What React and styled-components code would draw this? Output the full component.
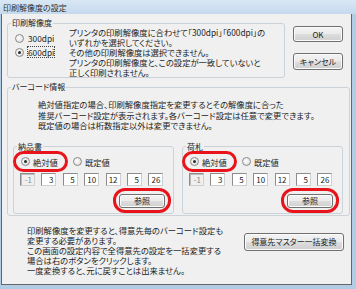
import styled, { createGlobalStyle } from 'styled-components';

const GlobalStyle = createGlobalStyle`
  html, body {
    margin: 0;
    padding: 0;
    width: 356px;
    height: 289px;
    overflow: hidden;
    background: #f0f0f0;
  }
  body {
    font-family: "Noto Sans CJK JP", "Noto Sans", sans-serif;
    font-feature-settings: "palt";
    color: #1c1c1c;
  }
`;

const Window = styled.div`
  width: 356px;
  height: 289px;
  display: flex;
  flex-direction: column;
  background: #b3cce6;
`;

const TitleBar = styled.div`
  height: 14px;
  flex: none;
  display: flex;
  align-items: center;
  padding-left: 3px;
  font-size: 8px;
  color: #2e2e2e;
  background: linear-gradient(#d9e7f5, #c6d9ed);
`;

const Client = styled.div`
  flex: 1;
  margin: 0 4px 4px 1px;
  border: 1px solid #666;
  border-top: none;
  background: #f0f0f0;
  padding-top: 5px;
  display: flex;
  flex-direction: column;
  font-size: 8.3px;
`;

const TopRow = styled.div`
  display: flex;
  align-items: flex-start;
  gap: 8px;
  padding-left: 5px;
`;

const Group = styled.fieldset`
  margin: 0;
  padding: 0;
  min-width: 0;
  border: 1px solid #cbd2d8;
  border-radius: 3px;
  width: ${(p) => (p.$width ? `${p.$width}px` : 'auto')};
  box-sizing: border-box;
`;

const Legend = styled.legend`
  font-size: 8px;
  line-height: 8px;
  padding: 0 1px;
  margin-left: 3px;
`;

const ResolutionBody = styled.div`
  display: flex;
  padding-left: 7px;
`;

const RadioCol = styled.div`
  width: 54px;
  flex: none;
  padding-top: 4px;
  display: flex;
  flex-direction: column;
`;

const RadioRow = styled.label`
  position: relative;
  height: 14px;
  display: flex;
  align-items: center;
  gap: ${(p) => p.$gap ?? 4}px;
  white-space: nowrap;

  &::after {
    content: '';
    display: ${(p) => (p.$ring ? 'block' : 'none')};
    position: absolute;
    top: -4px;
    bottom: -3px;
    left: -8px;
    right: -10px;
    border: 3px solid #e8131b;
    border-radius: 11px;
  }
`;

const Radio = styled.span`
  position: relative;
  width: 7px;
  height: 7px;
  flex: none;
  border-radius: 50%;
  border: 1px solid #8a8a8a;
  background: radial-gradient(circle at 40% 40%, #ffffff, #d6d6d6);

  &::after {
    content: '';
    display: ${(p) => (p.$checked ? 'block' : 'none')};
    position: absolute;
    top: 2px;
    left: 2px;
    width: 3px;
    height: 3px;
    border-radius: 50%;
    background: #2a2a2a;
  }
`;

const RadioText = styled.span`
  line-height: 10px;
  outline: ${(p) => (p.$focus ? '1px dotted #444' : 'none')};
`;

const Lines = styled.div`
  line-height: ${(p) => p.$lh ?? 10}px;
  white-space: nowrap;
  padding-left: ${(p) => p.$indent ?? 0}px;
  margin-bottom: ${(p) => p.$after ?? 0}px;
`;

const ButtonCol = styled.div`
  margin-top: 7px;
  width: 50px;
  display: flex;
  flex-direction: column;
  gap: 11px;
`;

const WinButton = styled.button`
  position: relative;
  width: ${(p) => p.$w}px;
  height: ${(p) => p.$h}px;
  padding: 0;
  border: 1px solid #707070;
  border-radius: 3px;
  background: linear-gradient(#f3f3f3 0%, #ebebeb 48%, #dddddd 52%, #cfcfcf 100%);
  box-shadow: inset 0 0 0 1px #fbfbfb;
  font-family: inherit;
  font-feature-settings: "palt";
  font-size: 8px;
  color: #1c1c1c;
  display: flex;
  align-items: center;
  justify-content: center;

  &::after {
    content: '';
    display: ${(p) => (p.$ring ? 'block' : 'none')};
    position: absolute;
    top: -7px;
    bottom: -6px;
    left: -7px;
    right: -7px;
    border: 3px solid #e8131b;
    border-radius: 12px;
  }
`;

const BarcodeGroup = styled(Group)`
  margin: 5px 1px 0 5px;
`;

const BarcodeBody = styled.div`
  padding: 8px 6px 1px 5px;
`;

const SubGrid = styled.div`
  display: grid;
  grid-template-columns: 1fr 1fr;
  gap: 8px;
`;

const SubBody = styled.div`
  padding: 4px 0 5px 7px;
`;

const RadioPair = styled.div`
  display: flex;
  gap: 15px;
`;

const NumRow = styled.div`
  display: flex;
  gap: 6.4px;
  margin: 4px 0 0 -1px;
`;

const NumBox = styled.div`
  width: 15px;
  height: 13px;
  box-sizing: border-box;
  border: 1px solid;
  border-color: #8c8c8c #cfcfcf #cfcfcf #8c8c8c;
  background: ${(p) => (p.$disabled ? '#f0f0f0' : '#ffffff')};
  box-shadow: ${(p) => (p.$disabled ? 'inset 1px 1px 0 #bdbdbd' : 'none')};
  color: ${(p) => (p.$disabled ? '#8a8a8a' : '#1c1c1c')};
  font-size: 8px;
  line-height: 11px;
  text-align: right;
  padding-right: 2px;
`;

const RefRow = styled.div`
  display: flex;
  justify-content: flex-end;
  padding-right: ${(p) => p.$pr ?? 9}px;
  margin-top: 8px;
`;

const BottomRow = styled.div`
  display: flex;
  align-items: flex-start;
  padding: 9px 7px 0 25px;
`;

const BulkButton = styled(WinButton)`
  margin: 8px 0 0 auto;
`;

const values = [-1, 3, 5, 10, 12, 5, 26];

const BarcodePanel = ({ title, pr }) => (
  <Group>
    <Legend>{title}</Legend>
    <SubBody>
      <RadioPair>
        <RadioRow $ring $gap={3}>
          <Radio $checked />
          <RadioText>絶対値</RadioText>
        </RadioRow>
        <RadioRow $gap={3}>
          <Radio />
          <RadioText>既定値</RadioText>
        </RadioRow>
      </RadioPair>
      <NumRow>
        {values.map((v, i) => (
          <NumBox key={i} $disabled={i === 0}>
            {v}
          </NumBox>
        ))}
      </NumRow>
      <RefRow $pr={pr}>
        <WinButton $w={46} $h={14} $ring>
          参照
        </WinButton>
      </RefRow>
    </SubBody>
  </Group>
);

const App = () => {
  return (
    <Window>
      <GlobalStyle />
      <TitleBar>印刷解像度の設定</TitleBar>
      <Client>
        <TopRow>
          <Group $width={278}>
            <Legend>印刷解像度</Legend>
            <ResolutionBody>
              <RadioCol>
                <RadioRow>
                  <Radio />
                  <RadioText>300dpi</RadioText>
                </RadioRow>
                <RadioRow>
                  <Radio $checked />
                  <RadioText $focus>600dpi</RadioText>
                </RadioRow>
              </RadioCol>
              <Lines>
                <div>プリンタの印刷解像度に合わせて「300dpi」「600dpi」の</div>
                <div>いずれかを選択してください。</div>
                <div>その他の印刷解像度は選択できません。</div>
                <div>プリンタの印刷解像度と、この設定が一致していないと</div>
                <div>正しく印刷されません。</div>
              </Lines>
            </ResolutionBody>
          </Group>
          <ButtonCol>
            <WinButton $w={50} $h={16}>OK</WinButton>
            <WinButton $w={50} $h={17}>キャンセル</WinButton>
          </ButtonCol>
        </TopRow>

        <BarcodeGroup>
          <Legend>バーコード情報</Legend>
          <BarcodeBody>
            <Lines $lh={10.5} $indent={25} $after={12}>
              <div>絶対値指定の場合、印刷解像度指定を変更するとその解像度に合った</div>
              <div>推奨バーコード設定が表示されます。各バーコード設定は任意で変更できます。</div>
              <div>既定値の場合は桁数指定以外は変更できません。</div>
            </Lines>
            <SubGrid>
              <BarcodePanel title="納品書" pr={8} />
              <BarcodePanel title="荷札" pr={9} />
            </SubGrid>
          </BarcodeBody>
        </BarcodeGroup>

        <BottomRow>
          <Lines>
            <div>印刷解像度を変更すると、得意先毎のバーコード設定も</div>
            <div>変更する必要があります。</div>
            <div>この画面の設定内容で全得意先の設定を一括変更する</div>
            <div>場合は右のボタンをクリックします。</div>
            <div>一度変換すると、元に戻すことは出来ません。</div>
          </Lines>
          <BulkButton $w={100} $h={18}>得意先マスター一括変換</BulkButton>
        </BottomRow>
      </Client>
    </Window>
  );
};

export default App;
